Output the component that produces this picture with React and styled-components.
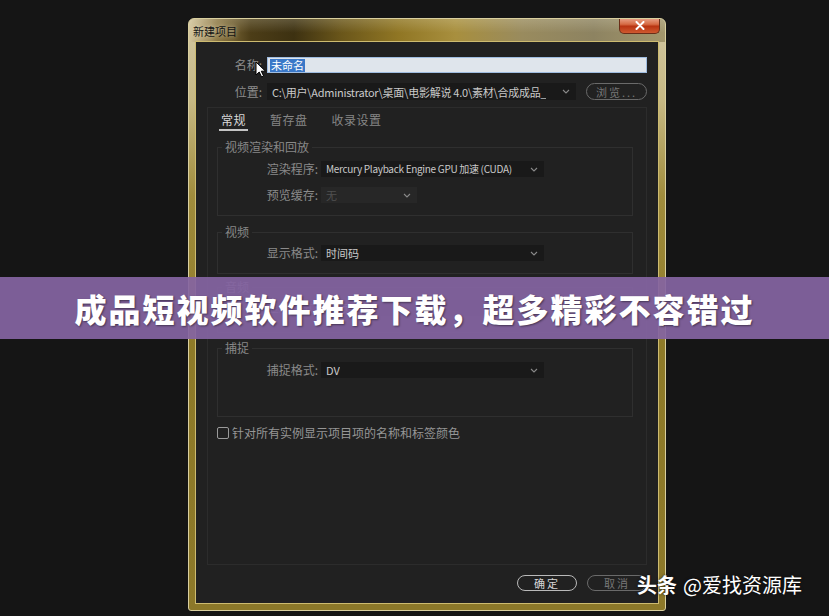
import React from "react";
import styled, { createGlobalStyle } from "styled-components";

const GlobalStyle = createGlobalStyle`
  html, body { margin: 0; padding: 0; background: #151515; }
  body {
    width: 829px; height: 616px; overflow: hidden;
    font-family: "Noto Sans CJK SC", "Noto Sans", sans-serif;
  }
  * { box-sizing: border-box; }
`;

const Page = styled.div`
  position: relative;
  width: 829px;
  height: 616px;
  padding: 18px 0 0 188px;
  background: #151515;
  overflow: hidden;
`;

const Dialog = styled.div`
  width: 478px;
  height: 593px;
  border: 1px solid #d9cf9f;
  border-radius: 6px 6px 3px 3px;
  background: linear-gradient(180deg, #d2c7a2 0%, #c6b883 14%, #a08c3c 30%, #8e7a28 55%, #8c7829 100%);
  display: flex;
  flex-direction: column;
  overflow: hidden;
`;

const TitleBar = styled.div`
  height: 23px;
  flex: none;
  display: flex;
  justify-content: space-between;
  padding: 0 5px 0 4px;
  background:
    linear-gradient(180deg, rgba(255,255,240,0.18), rgba(255,255,255,0) 60%),
    linear-gradient(90deg, #d3c59c 0%, #8c7744 6%, #4c3d17 13%, #3d3111 22%, #6a561a 32%, #907624 44%, #a88f3e 56%, #998b5e 70%, #8d8361 85%, #a3976c 100%);
`;

const TitleText = styled.span`
  align-self: center;
  font-size: 11px;
  line-height: 14px;
  color: #141414;
  text-shadow: 0 0 5px rgba(255, 250, 225, 0.75);
`;

const CloseButton = styled.div`
  width: 41px;
  height: 16px;
  margin-top: -1px;
  border: 1px solid #6a2e18;
  border-top: none;
  border-radius: 0 0 5px 5px;
  background: linear-gradient(180deg, #eaa68c 0%, #d66a44 42%, #b93412 55%, #cf5a30 100%);
  display: flex;
  align-items: center;
  justify-content: center;
`;

const Body = styled.div`
  flex: 1;
  margin: 0 7px 7px;
  background: #212121;
  box-shadow: 0 0 0 1px #cdbb70;
  display: flex;
  flex-direction: column;
  padding: 15px 11px 12px;
`;

const FormRow = styled.div`
  display: grid;
  grid-template-columns: 55px minmax(0, 1fr);
  column-gap: 5px;
  align-items: center;
  height: 16px;
  & + & { margin-top: 10px; }
`;

const FieldLabel = styled.span`
  text-align: right;
  font-size: 12px;
  line-height: 16px;
  color: #8c8c8c;
  white-space: nowrap;
`;

const NameInput = styled.div`
  height: 16px;
  background: #dfe5ec;
  border: 1px solid #9fbce0;
  padding-left: 2px;
  display: flex;
  align-items: center;
`;

const Selected = styled.span`
  background: #3a78c8;
  color: #fff;
  font-size: 11px;
  line-height: 13px;
  padding: 0 1px;
`;

const LocationWrap = styled.div`
  display: flex;
  gap: 10px;
  height: 17px;
  min-width: 0;
`;

const Select = styled.div`
  width: ${(p) => (p.$w ? `${p.$w}px` : "auto")};
  flex: ${(p) => (p.$w ? "none" : "1")};
  min-width: 0;
  height: ${(p) => p.$h || 16}px;
  background: ${(p) => (p.$disabled ? "#272727" : "#191919")};
  color: ${(p) => (p.$disabled ? "#505050" : "#c9c9c9")};
  font-size: ${(p) => (p.$narrow ? "10px" : "11px")};
  letter-spacing: ${(p) => (p.$narrow ? "-0.3px" : p.$tight ? "-0.25px" : "0")};
  padding: 0 6px 0 5px;
  display: flex;
  align-items: center;
  justify-content: space-between;
  gap: 6px;
  white-space: nowrap;
  overflow: hidden;
`;

const SelectText = styled.span`
  overflow: hidden;
  text-overflow: ellipsis;
  line-height: 14px;
`;

const Pill = styled.div`
  width: ${(p) => p.$w || 60}px;
  height: ${(p) => p.$h || 16}px;
  border: 1.5px solid ${(p) => (p.$primary ? "#b9b9b9" : "#6a6a6a")};
  border-radius: 9px;
  color: ${(p) => (p.$primary ? "#d6d6d6" : "#777")};
  font-size: 11px;
  letter-spacing: 2px;
  display: flex;
  align-items: center;
  justify-content: center;
  flex: none;
`;

const Panel = styled.div`
  flex: 1;
  margin-top: 8px;
  border: 1px solid #2c2c2c;
  padding: 0 13px 0 9px;
  display: flex;
  flex-direction: column;
`;

const TabList = styled.div`
  display: flex;
  gap: 20px;
  padding-left: 2px;
`;

const Tab = styled.div`
  padding: 5px 2px 2px;
  font-size: 12px;
  line-height: 14px;
  color: ${(p) => (p.$active ? "#d8d8d8" : "#868686")};
  border-bottom: 2px solid ${(p) => (p.$active ? "#c4c4c4" : "transparent")};
  letter-spacing: 0.5px;
`;

const Group = styled.fieldset`
  margin: ${(p) => p.$mt}px 0 0;
  border: 1px solid #2f2f2f;
  padding: ${(p) => p.$pt || 7}px 0 ${(p) => p.$pb}px;
  min-width: 0;
`;

const Legend = styled.legend`
  margin-left: 4px;
  padding: 0 3px;
  font-size: 12px;
  line-height: 14px;
  color: #888;
`;

const SetRow = styled.div`
  display: grid;
  grid-template-columns: 100px auto;
  justify-content: start;
  column-gap: 3px;
  align-items: center;
  height: 16px;
  & + & { margin-top: 10px; }
`;

const SetLabel = styled.span`
  text-align: right;
  font-size: 12px;
  line-height: 16px;
  color: #8a8a8a;
  white-space: nowrap;
`;

const CheckRow = styled.div`
  margin-top: 10px;
  display: flex;
  align-items: center;
  gap: 3px;
  height: 12px;
`;

const Checkbox = styled.span`
  width: 12px;
  height: 12px;
  border: 1.5px solid #9a9a9a;
  border-radius: 2px;
`;

const CheckLabel = styled.span`
  font-size: 12px;
  line-height: 14px;
  color: #969696;
`;

const Footer = styled.div`
  margin-top: 10px;
  display: flex;
  justify-content: flex-end;
  gap: 10px;
`;

const Banner = styled.div`
  position: absolute;
  left: 0;
  right: 0;
  top: 277px;
  height: 62px;
  background: rgba(132, 100, 161, 0.93);
  display: flex;
  align-items: center;
  justify-content: center;
  font-size: 32px;
  font-weight: 900;
  letter-spacing: 2px;
  color: #fff;
  text-shadow: 1px 1px 2px rgba(0, 0, 0, 0.45);
`;

const Watermark = styled.div`
  position: absolute;
  left: 637px;
  top: 572px;
  color: #fff;
  font-size: 20px;
  line-height: 26px;
  white-space: nowrap;
  text-shadow: 0 0 3px rgba(0, 0, 0, 0.7);
`;

const Strong = styled.span`
  font-weight: 700;
  margin-right: 6px;
`;

const Cursor = styled.svg`
  position: absolute;
  left: 255px;
  top: 61px;
`;

const Chevron = () => (
  <svg width="8" height="5" viewBox="0 0 8 5">
    <path d="M1 1 L4 4 L7 1" fill="none" stroke="#888" strokeWidth="1.1" />
  </svg>
);

export default function App() {
  return (
    <>
      <GlobalStyle />
      <Page>
        <Dialog>
          <TitleBar>
            <TitleText>新建项目</TitleText>
            <CloseButton>
              <svg width="10" height="9" viewBox="0 0 10 9">
                <path d="M1.5 1 L8.5 8 M8.5 1 L1.5 8" stroke="#fff" strokeWidth="2" strokeLinecap="round" />
              </svg>
            </CloseButton>
          </TitleBar>
          <Body>
            <FormRow>
              <FieldLabel>名称:</FieldLabel>
              <NameInput>
                <Selected>未命名</Selected>
              </NameInput>
            </FormRow>
            <FormRow>
              <FieldLabel>位置:</FieldLabel>
              <LocationWrap>
                <Select $h={17} $tight>
                  <SelectText>C:\用户\Administrator\桌面\电影解说 4.0\素材\合成成品_</SelectText>
                  <Chevron />
                </Select>
                <Pill $w={61} $h={17}>浏览...</Pill>
              </LocationWrap>
            </FormRow>
            <Panel>
              <TabList>
                <Tab $active>常规</Tab>
                <Tab>暂存盘</Tab>
                <Tab>收录设置</Tab>
              </TabList>
              <Group $mt={9} $pb={12}>
                <Legend>视频渲染和回放</Legend>
                <SetRow>
                  <SetLabel>渲染程序:</SetLabel>
                  <Select $w={223} $narrow>
                    <SelectText>Mercury Playback Engine GPU 加速 (CUDA)</SelectText>
                    <Chevron />
                  </Select>
                </SetRow>
                <SetRow>
                  <SetLabel>预览缓存:</SetLabel>
                  <Select $w={96} $disabled>
                    <SelectText>无</SelectText>
                    <Chevron />
                  </Select>
                </SetRow>
              </Group>
              <Group $mt={9} $pt={6} $pb={12}>
                <Legend>视频</Legend>
                <SetRow>
                  <SetLabel>显示格式:</SetLabel>
                  <Select $w={223}>
                    <SelectText>时间码</SelectText>
                    <Chevron />
                  </Select>
                </SetRow>
              </Group>
              <Group $mt={6} $pt={6} $pb={16}>
                <Legend>音频</Legend>
                <SetRow>
                  <SetLabel>显示格式:</SetLabel>
                  <Select $w={223}>
                    <SelectText>音频采样</SelectText>
                    <Chevron />
                  </Select>
                </SetRow>
              </Group>
              <Group $mt={8} $pt={7} $pb={38}>
                <Legend>捕捉</Legend>
                <SetRow>
                  <SetLabel>捕捉格式:</SetLabel>
                  <Select $w={223}>
                    <SelectText>DV</SelectText>
                    <Chevron />
                  </Select>
                </SetRow>
              </Group>
              <CheckRow>
                <Checkbox />
                <CheckLabel>针对所有实例显示项目项的名称和标签颜色</CheckLabel>
              </CheckRow>
            </Panel>
            <Footer>
              <Pill $primary>确定</Pill>
              <Pill>取消</Pill>
            </Footer>
          </Body>
        </Dialog>
        <Cursor width="12" height="17" viewBox="0 0 12 17">
          <path d="M1 1 L1 14 L4.2 11 L6.6 16 L8.6 15 L6.3 10.2 L10.5 10.2 Z" fill="#fff" stroke="#000" strokeWidth="1" strokeLinejoin="round" />
        </Cursor>
        <Banner>成品短视频软件推荐下载，超多精彩不容错过</Banner>
        <Watermark>
          <Strong>头条</Strong>@爱找资源库
        </Watermark>
      </Page>
    </>
  );
}
